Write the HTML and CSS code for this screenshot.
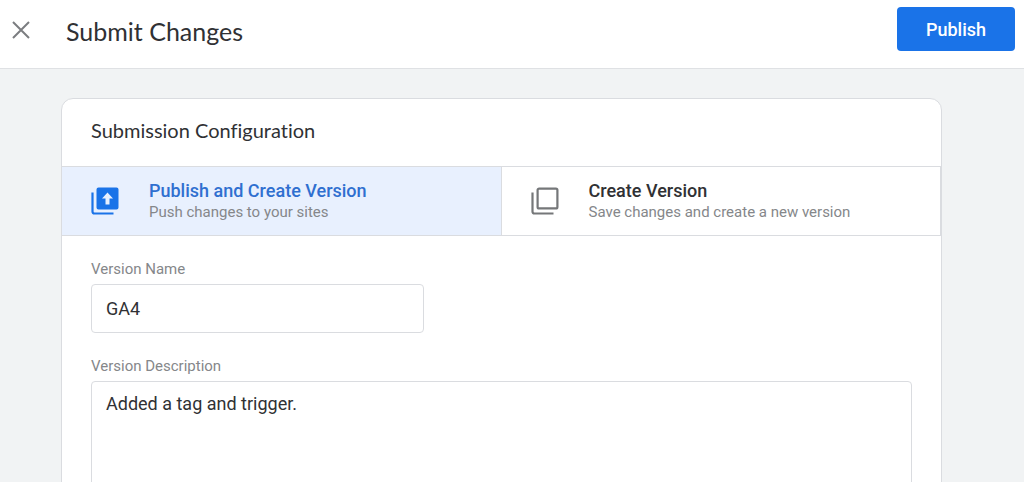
FILE: index.html
```html
<!DOCTYPE html>
<html lang="en">
<head>
  <meta charset="utf-8">
  <meta name="viewport" content="width=device-width, initial-scale=1">
  <title>Submit Changes</title>
  <link rel="stylesheet" href="styles.css">
</head>
<body>
  <header class="topbar">
    <button class="close" type="button" aria-label="Close">
      <svg width="18" height="18" viewBox="0 0 18 18" fill="none" stroke="currentColor" stroke-width="2" aria-hidden="true"><path d="M1 1l16 16M17 1L1 17"/></svg>
    </button>
    <h1 class="title">Submit Changes</h1>
    <button class="publish" type="button">Publish</button>
  </header>
  <main class="content">
    <section class="card">
      <h2 class="card-title">Submission Configuration</h2>
      <div class="options">
        <button class="option option-selected" type="button" aria-pressed="true">
          <svg class="option-icon" width="28" height="28" viewBox="0 0 28 28" aria-hidden="true">
            <path d="M1.500 5.500v19a2 2 0 0 0 2 2H22.500" fill="none" stroke="currentColor" stroke-width="2.200"/>
            <path fill="currentColor" fill-rule="evenodd" d="M7.500 0.500h18a2 2 0 0 1 2 2v18a2 2 0 0 1-2 2h-18a2 2 0 0 1-2-2v-18a2 2 0 0 1 2-2zM16.500 5.500l-5.500 6h3.500v6h4v-6h3.500z"/>
          </svg>
          <span class="option-text">
            <span class="option-name">Publish and Create Version</span>
            <span class="option-note">Push changes to your sites</span>
          </span>
        </button>
        <button class="option" type="button" aria-pressed="false">
          <svg class="option-icon" width="28" height="28" viewBox="0 0 28 28" fill="none" stroke="currentColor" stroke-width="2.200" aria-hidden="true">
            <path d="M1.500 5.500v19a2 2 0 0 0 2 2H22.500"/>
            <rect x="6.600" y="1.600" width="19.800" height="19.800" rx="1.500"/>
          </svg>
          <span class="option-text">
            <span class="option-name">Create Version</span>
            <span class="option-note">Save changes and create a new version</span>
          </span>
        </button>
      </div>
      <form class="form">
        <div class="field">
          <label class="label" for="version-name">Version Name</label>
          <input class="control control-short" id="version-name" type="text" value="GA4">
        </div>
        <div class="field">
          <label class="label" for="version-description">Version Description</label>
          <textarea class="control control-long" id="version-description" rows="8">Added a tag and trigger.</textarea>
        </div>
      </form>
    </section>
  </main>
</body>
</html>
```
FILE: styles.css
```css
* {
  box-sizing: border-box;
}

body {
  margin: 0;
  height: 100vh;
  display: flex;
  flex-direction: column;
  background: #f1f3f4;
  color: #303134;
  font-family: Roboto, "Liberation Sans", sans-serif;
}

button {
  margin: 0;
  border: 0;
  font-family: inherit;
  cursor: pointer;
}

.topbar {
  flex: none;
  display: flex;
  align-items: center;
  padding: 7px 9px 17px 12px;
  background: #fff;
  border-bottom: 1px solid #dfe1e4;
}

.close {
  display: flex;
  padding: 2px 0 0;
  background: none;
  color: #7b7d80;
}

.title {
  margin: 0;
  padding: 4px 0 0 36px;
  flex: 1;
  font-family: Lato, sans-serif;
  font-size: 25px;
  line-height: 32px;
  font-weight: 400;
}

.publish {
  padding: 0 29px;
  height: 44px;
  border-radius: 4px;
  background: #1a73e8;
  color: #fff;
  font-size: 18px;
  font-weight: 500;
}

.content {
  flex: 1;
  min-height: 0;
  overflow-y: auto;
  scrollbar-width: none;
  padding: 29px 82px 29px 61px;
}

.card {
  background: #fff;
  border: 1px solid #dadce0;
  border-radius: 12px;
}

.card-title {
  margin: 0;
  padding: 15px 29px 20px;
  font-family: Lato, sans-serif;
  font-size: 20px;
  line-height: 32px;
  font-weight: 400;
  font-variant-ligatures: none;
}

.options {
  display: grid;
  grid-template-columns: 1fr 1fr;
  border: solid #dadce0;
  border-width: 1px 0;
}

.option {
  display: flex;
  align-items: center;
  gap: 30px;
  padding: 13px 29px;
  border-right: 1px solid #dadce0;
  background: #fff;
  color: #757779;
  text-align: left;
}

.option-selected {
  background: #e8f0fe;
  color: #1a73e8;
}

.option-icon {
  flex: none;
}

.option-text {
  display: flex;
  flex-direction: column;
}

.option-name {
  color: #303134;
  font-size: 18px;
  line-height: 22px;
  font-weight: 500;
}

.option-selected .option-name {
  color: #2f6fd0;
}

.option-note {
  color: #85878a;
  font-size: 15px;
  line-height: 20px;
}

.form {
  display: flex;
  flex-direction: column;
  gap: 22px;
  padding: 22px 29px 29px;
}

.field {
  display: flex;
  flex-direction: column;
  gap: 4px;
}

.label {
  color: #85878a;
  font-size: 15px;
  line-height: 22px;
}

.control {
  margin: 0;
  width: 100%;
  padding: 10px 14px;
  border: 1px solid #dadce0;
  border-radius: 4px;
  background: #fff;
  color: #303134;
  font-family: inherit;
  font-size: 18px;
  line-height: 24px;
}

.control-short {
  max-width: 333px;
  height: 49px;
}

.control-long {
  resize: none;
}
```
